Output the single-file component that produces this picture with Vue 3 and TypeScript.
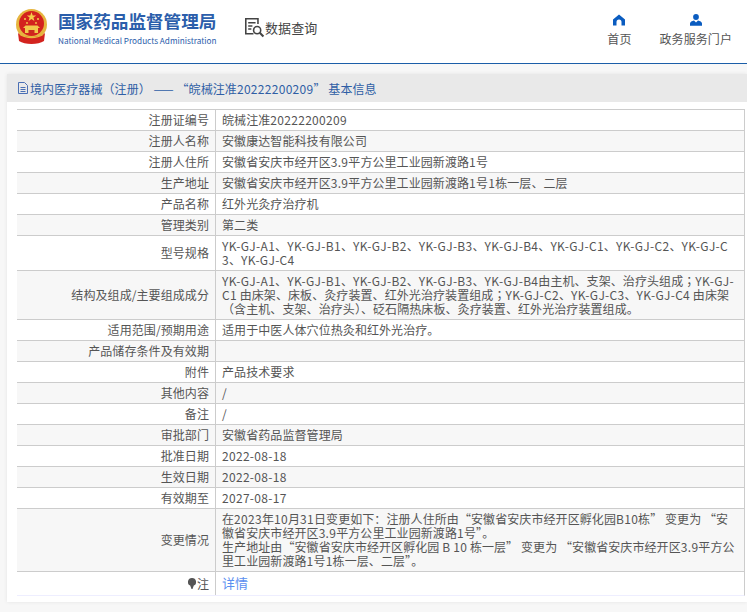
<script setup lang="ts">
type Row = { label: string; lines: string[]; link?: boolean; bulb?: boolean }

const rows: Row[] = [
  { label: '注册证编号', lines: ['皖械注准20222200209'] },
  { label: '注册人名称', lines: ['安徽康达智能科技有限公司'] },
  { label: '注册人住所', lines: ['安徽省安庆市经开区3.9平方公里工业园新渡路1号'] },
  { label: '生产地址', lines: ['安徽省安庆市经开区3.9平方公里工业园新渡路1号1栋一层、二层'] },
  { label: '产品名称', lines: ['红外光灸疗治疗机'] },
  { label: '管理类别', lines: ['第二类'] },
  { label: '型号规格', lines: ['YK-GJ-A1、YK-GJ-B1、YK-GJ-B2、YK-GJ-B3、YK-GJ-B4、YK-GJ-C1、YK-GJ-C2、YK-GJ-C', '3、YK-GJ-C4'] },
  { label: '结构及组成/主要组成成分', lines: ['YK-GJ-A1、YK-GJ-B1、YK-GJ-B2、YK-GJ-B3、YK-GJ-B4由主机、支架、治疗头组成；YK-GJ-', 'C1 由床架、床板、灸疗装置、红外光治疗装置组成；YK-GJ-C2、YK-GJ-C3、YK-GJ-C4 由床架', '（含主机、支架、治疗头）、砭石隔热床板、灸疗装置、红外光治疗装置组成。'] },
  { label: '适用范围/预期用途', lines: ['适用于中医人体穴位热灸和红外光治疗。'] },
  { label: '产品储存条件及有效期', lines: [''] },
  { label: '附件', lines: ['产品技术要求'] },
  { label: '其他内容', lines: ['/'] },
  { label: '备注', lines: ['/'] },
  { label: '审批部门', lines: ['安徽省药品监督管理局'] },
  { label: '批准日期', lines: ['2022-08-18'] },
  { label: '生效日期', lines: ['2022-08-18'] },
  { label: '有效期至', lines: ['2027-08-17'] },
  { label: '变更情况', lines: ['在2023年10月31日变更如下：注册人住所由“安徽省安庆市经开区孵化园B10栋” 变更为 “安', '徽省安庆市经开区3.9平方公里工业园新渡路1号”。', '生产地址由“安徽省安庆市经开区孵化园 B 10 栋一层” 变更为 “安徽省安庆市经开区3.9平方公', '里工业园新渡路1号1栋一层、二层”。'] },
  { label: '注', lines: ['详情'], link: true, bulb: true },
]

const title = '境内医疗器械（注册） —— “皖械注准20222200209” 基本信息'

// latin runs are set wider than the CJK font's own metrics, the semicolon is centred
function runs(text: string) {
  return text
    .split(/([\x21-\x7e]+|；)/)
    .filter(Boolean)
    .map((t) => ({ t, lat: /^[\x21-\x7e]/.test(t), semi: t === '；' }))
}
</script>

<template>
  <div class="page">
    <header class="top">
      <div class="brand">
        <svg class="emblem" width="33" height="35" viewBox="0 0 33 35">
          <circle cx="16.500" cy="15.500" r="15.500" fill="#e6b53f" />
          <circle cx="16.500" cy="14.500" r="12.500" fill="#d3231e" />
          <path d="M16.500 3l1.200 3.400h3.500l-2.800 2.100 1 3.400-2.900-2-2.900 2 1-3.400-2.800-2.100h3.500z" fill="#f5cf4a" />
          <circle cx="10" cy="10" r="1" fill="#f5cf4a" />
          <circle cx="23" cy="10" r="1" fill="#f5cf4a" />
          <circle cx="12" cy="14" r="0.900" fill="#f5cf4a" />
          <circle cx="21" cy="14" r="0.900" fill="#f5cf4a" />
          <path d="M8 19h17l-2.500-2.500h-12z" fill="#f2c94c" />
          <path d="M10 19h13v5H10z" fill="#f2c94c" />
          <path d="M13.500 21h6v3h-6z" fill="#c92a1e" />
          <path d="M3 24c3 3 8.500 4 13.500 4S27 27 30 24l-1 8c-3 2-7.500 3-12.500 3S7 34 4 32z" fill="#d3231e" />
          <path d="M5 25.500c3 2 7.500 3 11.500 3s8.500-1 11.500-3" fill="none" stroke="#e8bb3f" stroke-width="1.500" />
        </svg>
        <div class="brand-text">
          <div class="brand-cn">国家药品监督管理局</div>
          <div class="brand-en">National Medical Products Administration</div>
        </div>
      </div>
      <div class="query">
        <svg width="21" height="21" viewBox="0 0 20 20" fill="none" stroke="#444" stroke-width="1.500">
          <path d="M9 16H1.700V1.700h11.600v5" />
          <path d="M4 5.500h7M4 8.500h4M4 11.500h3" />
          <circle cx="12.500" cy="12.500" r="3.400" />
          <path d="M15 15l3.500 3.500" stroke-width="2" />
        </svg>
        <span>数据查询</span>
      </div>
      <nav class="links">
        <a class="nav-item">
          <svg width="12" height="12" viewBox="0 0 12 12"><path d="M6 .5L12 5.500V11.500H8.500V8a2.500 2.500 0 0 0-5 0v3.500H0V5.500z" fill="#0a5cc0" /></svg>
          <span>首页</span>
        </a>
        <a class="nav-item">
          <svg width="12" height="12" viewBox="0 0 12 12"><circle cx="6" cy="3" r="2.900" fill="#0a5cc0" /><path d="M0 11.800V9.500C0 7.800 2 7 4 6.500L6 8.500 8 6.500c2 .5 4 1.300 4 3v2.300z" fill="#0a5cc0" /></svg>
          <span>政务服务门户</span>
        </a>
      </nav>
    </header>
    <div class="strip">
      <section class="card">
        <div class="card-title">
          <svg width="10" height="12" viewBox="0 0 10 12" fill="none" stroke="#4a6fb5"><path d="M.5.500h6l3 3v8h-9zM2.500 5.500h5M2.500 7.500h5M2.500 9.500h5" /></svg>
          <span><span v-for="(r, k) in runs(title)" :key="k" class="run" :class="{ lat: r.lat }">{{ r.t }}</span></span>
        </div>
        <div class="table">
          <div v-for="(row, i) in rows" :key="row.label" class="row" :class="{ tint: i % 2 === 1 && !row.link }">
            <div class="label">
              <svg v-if="row.bulb" class="bulb" width="8" height="11" viewBox="0 0 8 11"><path d="M4 0a4 4 0 0 1 1.800 7.600L4.500 11h-1L2.200 7.600A4 4 0 0 1 4 0z" fill="#555" /></svg>
              <span class="label-text">{{ row.label }}</span>
            </div>
            <div class="value" :class="{ detail: row.link }">
              <div v-for="(line, j) in row.lines" :key="j" class="line"><span v-for="(r, k) in runs(line)" :key="k" class="run" :class="{ lat: r.lat, semi: r.semi }">{{ r.t }}</span></div>
            </div>
          </div>
        </div>
      </section>
    </div>
  </div>
</template>

<style scoped>
.page {
  width: 747px;
  height: 612px;
  overflow: hidden;
  background: #fff;
  font-family: "Noto Sans CJK SC", "Noto Sans", sans-serif;
  color: #555;
  font-size: 12px;
  letter-spacing: 0.08px;
}
.run {
  display: inline-block;
  white-space: pre;
}
.lat { letter-spacing: 0.3px; }
.semi { font-family: "Noto Sans CJK TC", sans-serif; }
.top {
  height: 64px;
  box-sizing: border-box;
  border-bottom: 1px solid #1b5ea8;
  display: flex;
  align-items: flex-start;
}
.brand {
  display: flex;
  align-items: flex-start;
  margin-left: 15px;
  padding-top: 9px;
  width: 229px;
}
.emblem { flex: none; }
.brand-text { margin-left: 10px; margin-top: 2px; }
.brand-cn {
  font-size: 17.600px;
  line-height: 20px;
  font-weight: 700;
  letter-spacing: 0;
  color: #2b5eab;
  white-space: nowrap;
}
.brand-en {
  font-size: 8.200px;
  line-height: 12px;
  margin-top: 3px;
  letter-spacing: 0;
  color: #2b5eab;
  white-space: nowrap;
}
.query {
  display: flex;
  align-items: center;
  padding-top: 17px;
  font-size: 13px;
  color: #444;
}
.links {
  margin-left: auto;
  display: flex;
  padding-top: 14px;
  margin-right: 15px;
  gap: 28px;
}
.nav-item {
  display: flex;
  flex-direction: column;
  align-items: center;
  color: #555;
  gap: 4px;
  line-height: 18px;
}
.strip {
  height: 548px;
  padding: 10px 0 0 7px;
  box-sizing: border-box;
  background: #f7f7f7;
}
.card {
  height: 528px;
  background: #fff;
  box-shadow: 0 0 4px rgba(0, 0, 0, 0.08);
}
.card-title {
  height: 28px;
  background: #e9e9e9;
  display: flex;
  align-items: center;
  padding-left: 11px;
  gap: 2px;
  color: #2f5ea5;
  white-space: nowrap;
}
.table {
  margin: 7px 0 0 10px;
  border-top: 1px solid #ccc;
  border-right: 1px solid #ccc;
  border-bottom: 1px solid #eef;
  width: 728px;
  box-sizing: border-box;
}
.row {
  display: flex;
  border-bottom: 1px solid #ccc;
}
.row:last-child { border-bottom: none; }
.tint { background: #f7f7f7; }
.label {
  width: 199px;
  flex: none;
  box-sizing: border-box;
  border-right: 1px solid #ccc;
  padding-right: 6px;
  display: flex;
  align-items: center;
  justify-content: flex-end;
  gap: 1px;
  line-height: 14px;
}
.bulb { margin-right: 0; }
.value {
  flex: 1;
  padding: 3px 0 3px 6px;
  white-space: nowrap;
}
.line {
  line-height: 14px;
  min-height: 14px;
}
.detail { padding: 3px 0 5px 6px; color: #5b8ff0; font-size: 13px; }
.detail .line { line-height: 15px; }
</style>

<style>
html, body { margin: 0; padding: 0; background: #fff; }
</style>
